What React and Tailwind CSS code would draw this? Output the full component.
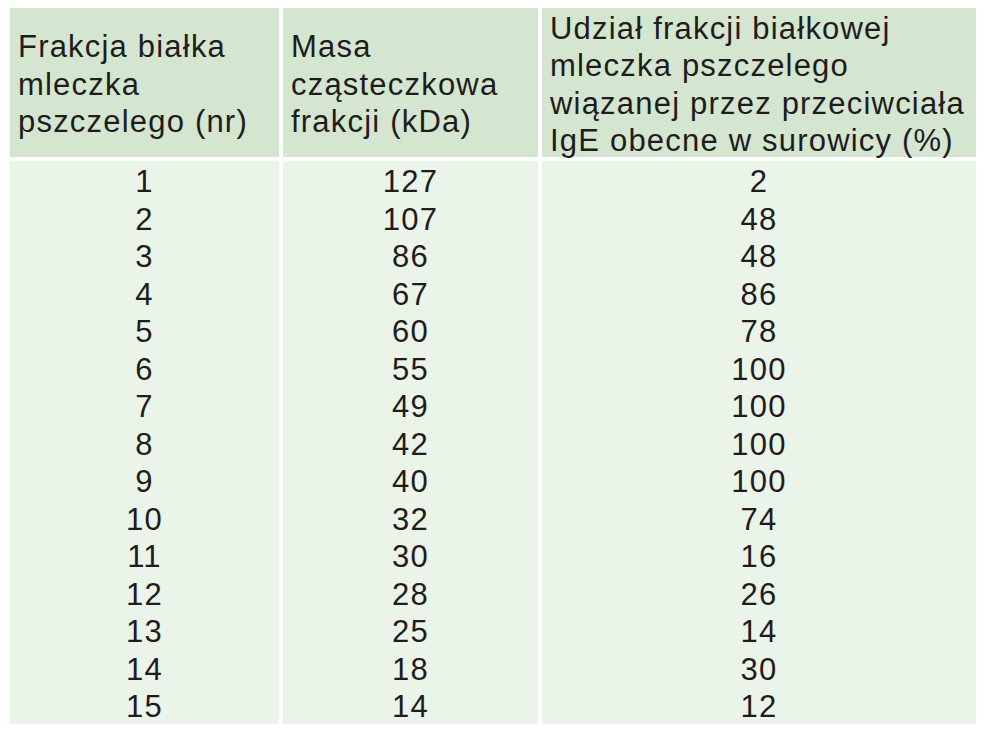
import React from 'react';

const rows = [
  [1, 127, 2],
  [2, 107, 48],
  [3, 86, 48],
  [4, 67, 86],
  [5, 60, 78],
  [6, 55, 100],
  [7, 49, 100],
  [8, 42, 100],
  [9, 40, 100],
  [10, 32, 74],
  [11, 30, 16],
  [12, 28, 26],
  [13, 25, 14],
  [14, 18, 30],
  [15, 14, 12],
];

const headers = [
  ['Frakcja białka', 'mleczka', 'pszczelego (nr)'],
  ['Masa', 'cząsteczkowa', 'frakcji (kDa)'],
  ['Udział frakcji białkowej', 'mleczka pszczelego', 'wiązanej przez przeciwciała', 'IgE obecne w surowicy (%)'],
];

export default function App() {
  return (
    <div className="h-[736px] w-[986px] bg-white pl-[10px] pt-[8px] font-['Liberation_Sans',Arial,sans-serif] text-[31px] leading-[37.5px] tracking-[1.2px] text-[#1f1c1d]">
      <div className="grid grid-cols-[269px_255px_434px] grid-rows-[149px_563px] gap-[4px]">
        {headers.map((lines, i) => (
          <div key={i} className="flex items-center bg-[#d4e6cf] pl-[8px] pt-[4px]">
            <div className="whitespace-nowrap">
              {lines.map((l) => (
                <div key={l}>{l}</div>
              ))}
            </div>
          </div>
        ))}
        {[0, 1, 2].map((c) => (
          <div key={c} className="bg-[#ebf4e9] pt-[2px] text-center">
            {rows.map((r) => (
              <div key={r[0]}>{r[c]}</div>
            ))}
          </div>
        ))}
      </div>
    </div>
  );
}
